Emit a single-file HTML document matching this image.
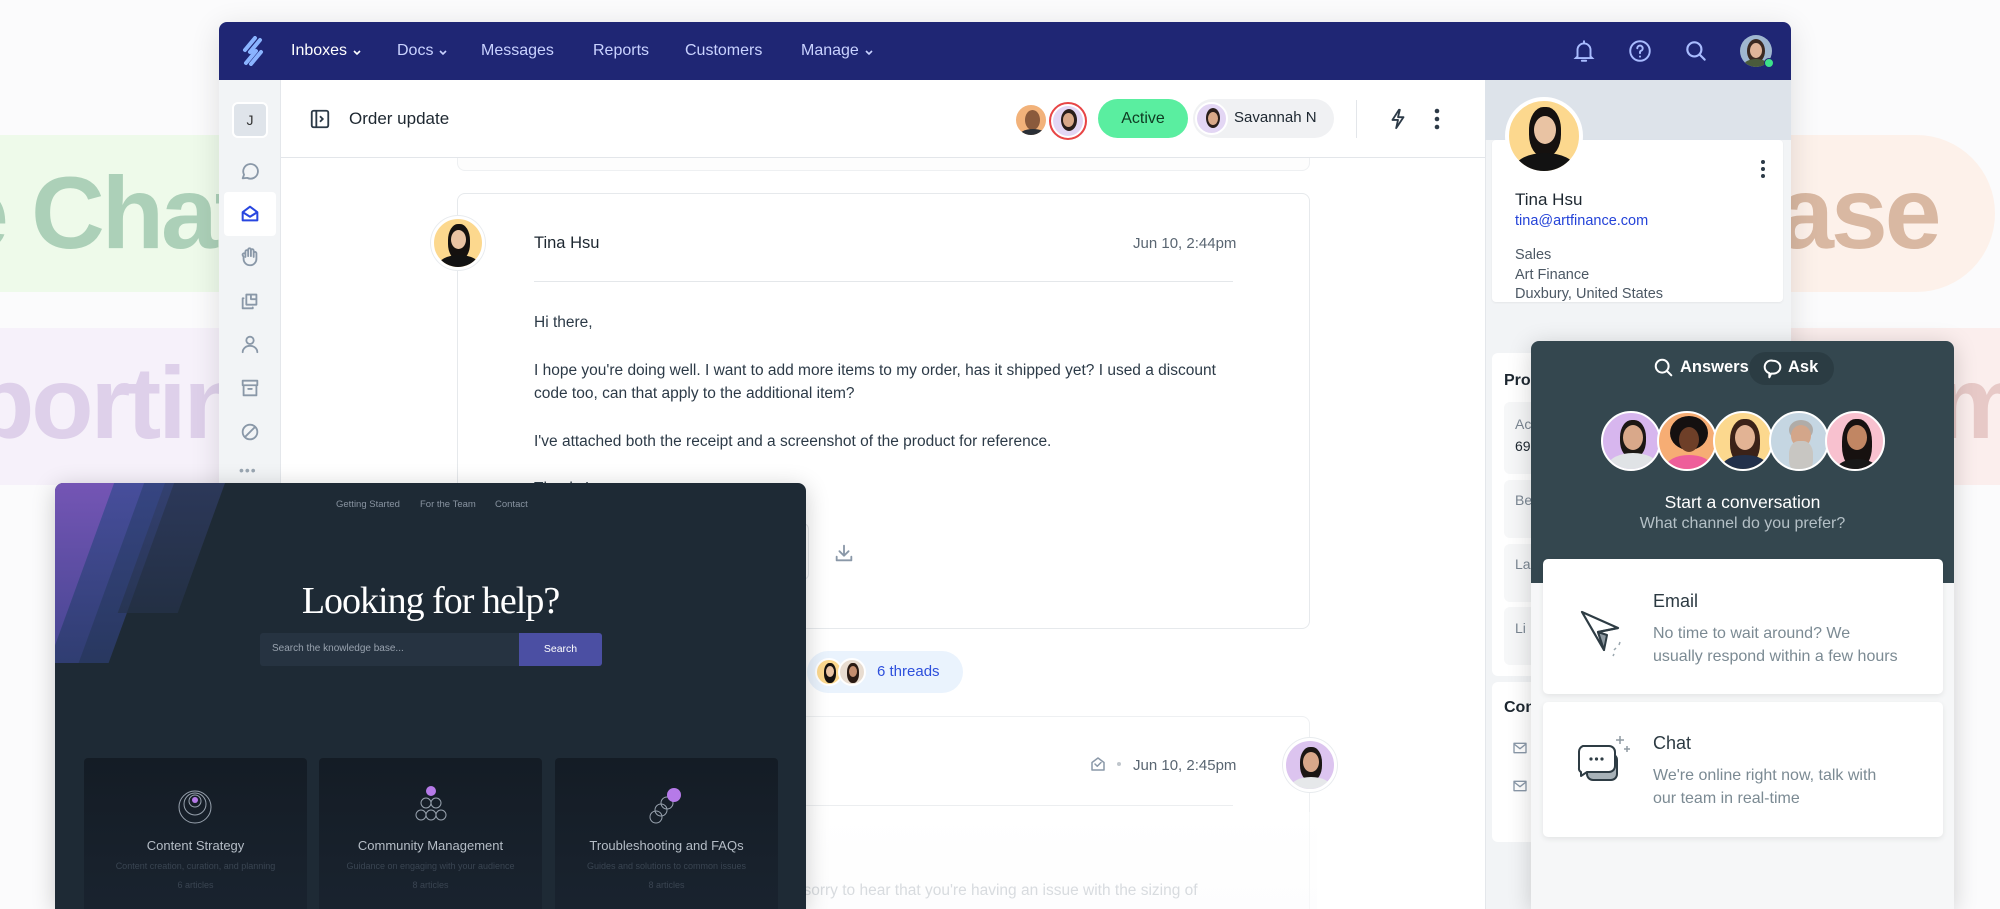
<!DOCTYPE html>
<html><head><meta charset="utf-8">
<style>
*{box-sizing:border-box;margin:0;padding:0}
body{width:2000px;height:909px;overflow:hidden;background:#fbfbfc;font-family:"Liberation Sans",sans-serif;position:relative;color:#1d2730}
.a{position:absolute}
.t{position:absolute;white-space:nowrap}
.big{font-weight:bold;font-size:102px;letter-spacing:-3px;line-height:1}
.av{position:absolute;border-radius:50%;overflow:hidden;border:2px solid #fff}
.nav{color:#c9d2ff;font-size:16px;top:20px}
.ic{stroke:#8a98a8;fill:none;stroke-width:2;stroke-linecap:round;stroke-linejoin:round}
.chev{position:absolute;top:27px}
</style></head><body>

<!-- background bands -->
<div class="a" style="left:0;top:135px;width:330px;height:157px;background:#eefaea"></div>
<div class="t big" style="left:-48px;top:162px;color:#acd0b8">e Chat</div>
<div class="a" style="left:0;top:328px;width:330px;height:157px;background:#f6f1fa"></div>
<div class="t big" style="left:-28px;top:352px;color:#ded0ea">porting</div>
<div class="a" style="left:1700px;top:135px;width:295px;height:157px;background:#fdf1ea;border-radius:0 80px 80px 0"></div>
<div class="t big" style="left:1718px;top:162px;color:#d9b8a2">base</div>
<div class="a" style="left:1700px;top:328px;width:300px;height:157px;background:#fbeeed"></div>
<div class="t big" style="left:1935px;top:352px;color:#e7c9c7">m</div>

<!-- app window -->
<div class="a" style="left:219px;top:22px;width:1572px;height:887px;background:#fff;border-radius:8px 8px 0 0;box-shadow:0 6px 30px rgba(0,0,0,.12);overflow:hidden">
 <div class="a" style="left:0;top:0;width:1572px;height:58px;background:#1f2674"></div>
 <svg class="a" style="left:22px;top:14px" width="24" height="30" viewBox="0 0 24 30"><path d="M4 14 L14 2 M9 16 L19 4 M5 27 L15 15 M10 28 L20 16" stroke="#8ab4ff" stroke-width="4" stroke-linecap="round"/></svg>
 <div class="t nav" style="left:72px;color:#fff">Inboxes</div>
 <svg class="chev" style="left:133px" width="10" height="8" viewBox="0 0 10 8"><path d="M2 2l3 3 3-3" fill="none" stroke="#fff" stroke-width="1.6"/></svg>
 <div class="t nav" style="left:178px">Docs</div>
 <svg class="chev" style="left:219px" width="10" height="8" viewBox="0 0 10 8"><path d="M2 2l3 3 3-3" fill="none" stroke="#c9d2ff" stroke-width="1.6"/></svg>
 <div class="t nav" style="left:262px">Messages</div>
 <div class="t nav" style="left:374px">Reports</div>
 <div class="t nav" style="left:466px">Customers</div>
 <div class="t nav" style="left:582px">Manage</div>
 <svg class="chev" style="left:645px" width="10" height="8" viewBox="0 0 10 8"><path d="M2 2l3 3 3-3" fill="none" stroke="#c9d2ff" stroke-width="1.6"/></svg>
 <svg class="a" style="left:1352px;top:16px" width="26" height="26" viewBox="0 0 24 24" fill="none" stroke="#a9bcff" stroke-width="1.8" stroke-linecap="round"><path d="M6 17V11a6 6 0 0 1 12 0v6l1.5 1.5h-15Z M10 21h4 M12 3v2"/></svg>
 <svg class="a" style="left:1408px;top:16px" width="26" height="26" viewBox="0 0 24 24" fill="none" stroke="#a9bcff" stroke-width="1.8" stroke-linecap="round"><circle cx="12" cy="12" r="9"/><path d="M9.5 9.5a2.5 2.5 0 1 1 3.5 2.3c-.7.3-1 .8-1 1.5V14 M12 17v.2"/></svg>
 <svg class="a" style="left:1464px;top:16px" width="26" height="26" viewBox="0 0 24 24" fill="none" stroke="#a9bcff" stroke-width="2" stroke-linecap="round"><circle cx="10.5" cy="10.5" r="6.5"/><path d="M15.5 15.5 20 20"/></svg>
 <div class="av" style="left:1521px;top:13px;width:32px;height:32px;background:#9fb7d0;border:none"><div class="a" style="left:7px;top:4px;width:18px;height:24px;border-radius:50%;background:#3b2a22"></div><div class="a" style="left:10px;top:8px;width:12px;height:15px;border-radius:50%;background:#e0b59a"></div><div class="a" style="left:4px;top:24px;width:24px;height:12px;border-radius:50%;background:#4a5a3c"></div></div>
 <div class="a" style="left:1545px;top:36px;width:10px;height:10px;border-radius:50%;background:#3de28a;border:1.5px solid #1f2674"></div>

 <!-- sidebar -->
 <div class="a" style="left:0;top:58px;width:62px;height:850px;background:#f2f4f6;border-right:1px solid #e4e7eb"></div>
 <div class="a" style="left:13px;top:80px;width:36px;height:36px;border-radius:6px;background:#dfe4ea;border:2px solid #fff;font-size:14px;text-align:center;line-height:32px;color:#333">J</div>
 <div class="a" style="left:5px;top:170px;width:52px;height:44px;border-radius:4px;background:#fff"></div>
 <svg class="a" style="left:20px;top:138px" width="22" height="22" viewBox="0 0 24 24"><path class="ic" d="M4 20l1.5-4A8 8 0 1 1 9 19.5Z"/></svg>
 <svg class="a" style="left:20px;top:181px" width="22" height="22" viewBox="0 0 24 24"><path d="M4 10l8-6 8 6v9H4Z M4 10l8 5 8-5" fill="none" stroke="#2846e0" stroke-width="2.2" stroke-linejoin="round"/></svg>
 <svg class="a" style="left:20px;top:224px" width="22" height="22" viewBox="0 0 24 24"><path class="ic" d="M7 12V6a1.5 1.5 0 0 1 3 0v5V4a1.5 1.5 0 0 1 3 0v7V5a1.5 1.5 0 0 1 3 0v7V8a1.5 1.5 0 0 1 3 0v6a7 7 0 0 1-14 0v-2l-1-2a1.5 1.5 0 0 1 3-1"/></svg>
 <svg class="a" style="left:20px;top:268px" width="22" height="22" viewBox="0 0 24 24"><path class="ic" d="M5 9h-1v11h11v-1 M8 5h11v11H8Z M13 5v5h6"/></svg>
 <svg class="a" style="left:20px;top:311px" width="22" height="22" viewBox="0 0 24 24"><circle class="ic" cx="12" cy="8" r="4"/><path class="ic" d="M4 21a8 7 0 0 1 16 0"/></svg>
 <svg class="a" style="left:20px;top:355px" width="22" height="22" viewBox="0 0 24 24"><path class="ic" d="M4 4h16v5H4Z M5 9v11h14V9 M10 13h4"/></svg>
 <svg class="a" style="left:20px;top:399px" width="22" height="22" viewBox="0 0 24 24"><circle class="ic" cx="12" cy="12" r="8"/><path class="ic" d="M7 17 17 7"/></svg>
 <div class="t" style="left:20px;top:440px;color:#9aa6b2;font-size:14px;letter-spacing:1px">•••</div>

 <!-- faded card above -->
 <div class="a" style="left:238px;top:130px;width:853px;height:19px;border:1px solid #eef0f2;border-top:none;border-radius:0 0 8px 8px;background:#fdfdfd"></div>
 <!-- header -->
 <div class="a" style="left:62px;top:58px;width:1204px;height:78px;border-bottom:1px solid #e3e6ea;background:#fff"></div>
 <svg class="a" style="left:90px;top:86px" width="22" height="22" viewBox="0 0 24 24"><rect x="3" y="3" width="18" height="18" rx="2" fill="none" stroke="#2c3a47" stroke-width="2"/><path d="M8 3v18 M12 9l3 3-3 3" fill="none" stroke="#2c3a47" stroke-width="2"/></svg>
 <div class="t" style="left:130px;top:87px;font-size:17px;color:#1d2730">Order update</div>
 <div class="av" style="left:795px;top:81px;width:34px;height:34px;background:#f2b27a"><div class="a" style="left:9px;top:5px;width:15px;height:20px;border-radius:50%;background:#8a5a3c"></div><div class="a" style="left:3px;top:24px;width:28px;height:14px;border-radius:50%;background:#2a2f36"></div></div>
 <div class="av" style="left:830px;top:80px;width:38px;height:38px;background:#e3d6f4;border:2px solid #e84545;box-shadow:inset 0 0 0 2px #fff"><div class="a" style="left:10px;top:5px;width:16px;height:22px;border-radius:50%;background:#2a1e1a"></div><div class="a" style="left:12px;top:9px;width:11px;height:14px;border-radius:50%;background:#d9a888"></div></div>
 <div class="a" style="left:879px;top:77px;width:90px;height:39px;border-radius:20px;background:#5aeea0;font-size:16px;text-align:center;line-height:39px;color:#0f3a22">Active</div>
 <div class="a" style="left:974px;top:77px;width:141px;height:39px;border-radius:20px;background:#f0f1f3"></div>
 <div class="av" style="left:976px;top:80px;width:33px;height:33px;background:#e3d6f4"><div class="a" style="left:9px;top:4px;width:14px;height:20px;border-radius:50%;background:#2a1e1a"></div><div class="a" style="left:11px;top:8px;width:10px;height:13px;border-radius:50%;background:#d9a888"></div></div>
 <div class="t" style="left:1015px;top:87px;font-size:15px;color:#1d2730">Savannah N</div>
 <div class="a" style="left:1137px;top:78px;width:1px;height:38px;background:#e3e6ea"></div>
 <svg class="a" style="left:1168px;top:85px" width="22" height="24" viewBox="0 0 24 24"><path d="M13 2 6 13h6l-2 9 8-12h-6l2-8Z" fill="none" stroke="#2c3a47" stroke-width="2" stroke-linejoin="round"/></svg>
 <svg class="a" style="left:1215px;top:86px" width="6" height="22" viewBox="0 0 6 22"><circle cx="3" cy="3" r="2.3" fill="#2c3a47"/><circle cx="3" cy="11" r="2.3" fill="#2c3a47"/><circle cx="3" cy="19" r="2.3" fill="#2c3a47"/></svg>

 <!-- message card -->
 <div class="a" style="left:238px;top:171px;width:853px;height:436px;border:1px solid #e6e9ec;border-radius:8px;background:#fff"></div>
 <div class="av" style="left:212px;top:194px;width:54px;height:54px;background:#fcd88e;border:3px solid #fff;box-shadow:0 0 0 1px #e8ebee"><div class="a" style="left:14px;top:5px;width:22px;height:36px;border-radius:45%;background:#15110f"></div><div class="a" style="left:17px;top:11px;width:15px;height:19px;border-radius:50%;background:#e9c3a3"></div><div class="a" style="left:4px;top:36px;width:42px;height:22px;border-radius:50%;background:#121212"></div></div>
 <div class="t" style="left:315px;top:212px;font-size:16.5px;color:#1d2730">Tina Hsu</div>
 <div class="t" style="left:914px;top:213px;font-size:15px;color:#5a6672;text-align:right;width:100px">Jun 10, 2:44pm</div>
 <div class="a" style="left:315px;top:259px;width:699px;height:1px;background:#e4e7ea"></div>
 <div class="a" style="left:315px;top:289px;font-size:15.5px;color:#2c3a47;line-height:23.5px;width:705px">
  <div>Hi there,</div>
  <div style="margin-top:24px">I hope you're doing well. I want to add more items to my order, has it shipped yet? I used a discount code too, can that apply to the additional item?</div>
  <div style="margin-top:24px">I've attached both the receipt and a screenshot of the product for reference.</div>
  <div style="margin-top:24px">Thanks!</div>
 </div>
 <div class="a" style="left:500px;top:501px;width:90px;height:57px;border:1px solid #e4e7ea;border-radius:6px"></div>
 <svg class="a" style="left:614px;top:519px" width="22" height="24" viewBox="0 0 24 24"><path class="ic" d="M12 4v11 M7 10l5 5 5-5 M4 16v4h16v-4"/></svg>
 <!-- threads -->
 <div class="a" style="left:588px;top:629px;width:156px;height:42px;border-radius:21px;background:#eaf3fd"></div>
 <div class="av" style="left:596px;top:636px;width:28px;height:28px;background:#fcd88e"><div class="a" style="left:7px;top:3px;width:12px;height:20px;border-radius:45%;background:#15110f"></div><div class="a" style="left:9px;top:6px;width:8px;height:11px;border-radius:50%;background:#e9c3a3"></div></div>
 <div class="av" style="left:619px;top:636px;width:28px;height:28px;background:#e8dcd0"><div class="a" style="left:7px;top:3px;width:12px;height:20px;border-radius:45%;background:#2a1a12"></div><div class="a" style="left:9px;top:6px;width:8px;height:11px;border-radius:50%;background:#c58e6e"></div></div>
 <div class="t" style="left:658px;top:641px;font-size:15px;color:#2d4fdc">6 threads</div>
 <!-- second card -->
 <div class="a" style="left:238px;top:694px;width:853px;height:260px;border:1px solid #eef0f2;border-radius:8px;background:#fff"></div>
 <div class="av" style="left:1064px;top:716px;width:54px;height:54px;background:#dcc4ef;border:3px solid #fff;box-shadow:0 0 0 1px #e8ebee"><div class="a" style="left:14px;top:6px;width:22px;height:34px;border-radius:45%;background:#1c1714"></div><div class="a" style="left:17px;top:11px;width:16px;height:20px;border-radius:50%;background:#d9a88a"></div><div class="a" style="left:5px;top:36px;width:40px;height:20px;border-radius:50%;background:#e6e8ea"></div></div>
 <svg class="a" style="left:870px;top:733px" width="18" height="18" viewBox="0 0 24 24"><path class="ic" d="M4 10l8-6 8 6v10H4Z M8 12l3 3 5-5"/></svg>
 <div class="a" style="left:898px;top:740px;width:4px;height:4px;border-radius:50%;background:#c0c6cc"></div>
 <div class="t" style="left:914px;top:735px;font-size:15px;color:#5a6672;text-align:right;width:100px">Jun 10, 2:45pm</div>
 <div class="a" style="left:315px;top:783px;width:699px;height:1px;background:#eceef0"></div>
 <div class="t" style="left:560px;top:860px;font-size:15.5px;color:#a8b0b8">I'm sorry to hear that you're having an issue with the sizing of</div>
 <div class="a" style="left:238px;top:790px;width:860px;height:120px;background:linear-gradient(rgba(255,255,255,.5),rgba(251,251,252,.6))"></div>

 <!-- right panel -->
 <div class="a" style="left:1266px;top:58px;width:306px;height:850px;background:#f2f4f6;border-left:1px solid #e4e7eb"></div>
 <div class="a" style="left:1266px;top:58px;width:306px;height:60px;background:#dde3ea"></div>
 <div class="a" style="left:1273px;top:118px;width:291px;height:162px;background:#fff;border-radius:4px;box-shadow:0 1px 2px rgba(0,0,0,.06)"></div>
 <div class="av" style="left:1286px;top:75px;width:78px;height:78px;background:#fcd88e;border:4px solid #fff"><div class="a" style="left:20px;top:6px;width:32px;height:50px;border-radius:45%;background:#15110f"></div><div class="a" style="left:25px;top:15px;width:22px;height:28px;border-radius:50%;background:#e9c3a3"></div><div class="a" style="left:6px;top:52px;width:60px;height:30px;border-radius:50%;background:#121212"></div></div>
 <svg class="a" style="left:1541px;top:137px" width="6" height="20" viewBox="0 0 6 20"><circle cx="3" cy="3" r="2" fill="#2c3a47"/><circle cx="3" cy="10" r="2" fill="#2c3a47"/><circle cx="3" cy="17" r="2" fill="#2c3a47"/></svg>
 <div class="t" style="left:1296px;top:168px;font-size:17px;color:#1d2730">Tina Hsu</div>
 <div class="t" style="left:1296px;top:191px;font-size:14.5px;color:#2443d8">tina@artfinance.com</div>
 <div class="t" style="left:1296px;top:224px;font-size:14.5px;color:#4c5864;line-height:19.5px">Sales<br>Art Finance<br>Duxbury, United States</div>
 <div class="a" style="left:1273px;top:331px;width:291px;height:323px;background:#fff;border-radius:6px"></div>
 <div class="t" style="left:1285px;top:350px;font-size:16px;font-weight:bold;color:#1d2730">Properties</div>
 <div class="a" style="left:1285px;top:380px;width:270px;height:72px;background:#f6f7f8;border-radius:6px"></div>
 <div class="t" style="left:1296px;top:394px;font-size:14px;color:#7a8692">Account</div>
 <div class="t" style="left:1296px;top:416px;font-size:14px;color:#1d2730">69</div>
 <div class="a" style="left:1285px;top:458px;width:270px;height:58px;background:#f6f7f8;border-radius:6px"></div>
 <div class="t" style="left:1296px;top:470px;font-size:14px;color:#7a8692">Be</div>
 <div class="a" style="left:1285px;top:522px;width:270px;height:58px;background:#f6f7f8;border-radius:6px"></div>
 <div class="t" style="left:1296px;top:534px;font-size:14px;color:#7a8692">La</div>
 <div class="a" style="left:1285px;top:585px;width:270px;height:58px;background:#f6f7f8;border-radius:6px"></div>
 <div class="t" style="left:1296px;top:598px;font-size:14px;color:#7a8692">Li</div>
 <div class="a" style="left:1273px;top:660px;width:291px;height:160px;background:#fff;border-radius:6px"></div>
 <div class="t" style="left:1285px;top:677px;font-size:16px;font-weight:bold;color:#1d2730">Contact</div>
 <svg class="a" style="left:1293px;top:718px" width="16" height="16" viewBox="0 0 24 24"><path class="ic" d="M3 5h18v14H3Z M3 6l9 7 9-7"/></svg>
 <svg class="a" style="left:1293px;top:756px" width="16" height="16" viewBox="0 0 24 24"><path class="ic" d="M3 5h18v14H3Z M3 6l9 7 9-7"/></svg>
</div>

<!-- chat widget -->
<div class="a" style="left:1531px;top:341px;width:423px;height:568px;background:#f6f7f8;border-radius:8px 8px 0 0;box-shadow:0 4px 24px rgba(0,0,0,.18);overflow:hidden">
 <div class="a" style="left:0;top:0;width:423px;height:242px;background:#34474f"></div>
 <svg class="a" style="left:122px;top:16px" width="22" height="22" viewBox="0 0 24 24"><circle cx="10" cy="10" r="7" fill="none" stroke="#fff" stroke-width="2.2"/><path d="M15 15l5 5" stroke="#fff" stroke-width="2.2" stroke-linecap="round"/></svg>
 <div class="t" style="left:149px;top:17px;font-size:16.5px;font-weight:bold;color:#fff">Answers</div>
 <div class="a" style="left:218px;top:11px;width:85px;height:33px;border-radius:17px;background:#2b3c43"></div>
 <svg class="a" style="left:231px;top:17px" width="22" height="22" viewBox="0 0 24 24"><path d="M12 3a8 7 0 0 1 0 14h-2l-2 4v-4.5A7 7 0 0 1 12 3Z" fill="none" stroke="#fff" stroke-width="2.2" stroke-linejoin="round"/></svg>
 <div class="t" style="left:257px;top:17px;font-size:16.5px;font-weight:bold;color:#fff">Ask</div>
 <div class="av" style="left:70px;top:70px;width:60px;height:60px;background:#d7b6ee"><div class="a" style="left:17px;top:7px;width:26px;height:38px;border-radius:45%;background:#1c1714"></div><div class="a" style="left:20px;top:12px;width:20px;height:25px;border-radius:50%;background:#d9a88a"></div><div class="a" style="left:5px;top:40px;width:50px;height:26px;border-radius:50%;background:#e0e3e6"></div></div>
 <div class="av" style="left:126px;top:70px;width:60px;height:60px;background:#f6ad74"><div class="a" style="left:11px;top:3px;width:38px;height:34px;border-radius:50%;background:#141010"></div><div class="a" style="left:20px;top:14px;width:20px;height:25px;border-radius:50%;background:#6e3f28"></div><div class="a" style="left:7px;top:42px;width:46px;height:24px;border-radius:50%;background:#ee5e9a"></div></div>
 <div class="av" style="left:182px;top:70px;width:60px;height:60px;background:#fcd88e"><div class="a" style="left:15px;top:6px;width:30px;height:46px;border-radius:45%;background:#3b2218"></div><div class="a" style="left:20px;top:12px;width:20px;height:25px;border-radius:50%;background:#e2b394"></div><div class="a" style="left:7px;top:42px;width:46px;height:24px;border-radius:50%;background:#22304a"></div></div>
 <div class="av" style="left:238px;top:70px;width:60px;height:60px;background:#c5d6e2"><div class="a" style="left:18px;top:7px;width:24px;height:20px;border-radius:50%;background:#b0aca8"></div><div class="a" style="left:20px;top:12px;width:20px;height:22px;border-radius:50%;background:#d3a68a"></div><div class="a" style="left:18px;top:28px;width:24px;height:32px;border-radius:40%;background:#c8c6c2"></div></div>
 <div class="av" style="left:294px;top:70px;width:60px;height:60px;background:#f8c1cf"><div class="a" style="left:15px;top:6px;width:30px;height:50px;border-radius:45%;background:#171110"></div><div class="a" style="left:20px;top:12px;width:20px;height:25px;border-radius:50%;background:#c18663"></div><div class="a" style="left:10px;top:46px;width:40px;height:20px;border-radius:50%;background:#181818"></div></div>
 <div class="t" style="left:0;width:423px;text-align:center;top:151px;font-size:17.5px;color:#fff">Start a conversation</div>
 <div class="t" style="left:0;width:423px;text-align:center;top:174px;font-size:16px;color:#b4c0c6">What channel do you prefer?</div>
 <div class="a" style="left:12px;top:218px;width:400px;height:135px;background:#fff;border-radius:5px;box-shadow:0 2px 6px rgba(0,0,0,.08)"></div>
 <svg class="a" style="left:45px;top:265px" width="56" height="56" viewBox="0 0 56 56"><path d="M6 6 42 22 22 26 28 44Z" fill="#fff" stroke="#2e3c44" stroke-width="2.2" stroke-linejoin="round"/><path d="M22 26 28 44 31 29Z" fill="#8f9aa2" stroke="#2e3c44" stroke-width="2" stroke-linejoin="round"/><path d="M42 22 22 26" stroke="#2e3c44" stroke-width="2"/><path d="M44 36l-1 3 M40 42l-2 2 M38 48l-1 2" stroke="#9aa6ae" stroke-width="1.5"/></svg>
 <div class="t" style="left:122px;top:250px;font-size:18px;color:#2c3a42">Email</div>
 <div class="t" style="left:122px;top:281px;font-size:16px;color:#7b8a93;line-height:23px">No time to wait around? We<br>usually respond within a few hours</div>
 <div class="a" style="left:12px;top:361px;width:400px;height:135px;background:#fff;border-radius:5px;box-shadow:0 2px 6px rgba(0,0,0,.08)"></div>
 <svg class="a" style="left:42px;top:393px" width="64" height="64" viewBox="0 0 64 64"><rect x="14" y="20" width="30" height="26" rx="6" fill="#a8b2b8" stroke="#2e3c44" stroke-width="2"/><path d="M10 12h26a6 6 0 0 1 6 6v14a6 6 0 0 1-6 6H14l-6 4v-4a4 4 0 0 1 -2-4V18a6 6 0 0 1 4-6Z" fill="#fff" stroke="#2e3c44" stroke-width="2" stroke-linejoin="round"/><circle cx="18" cy="25" r="1.6" fill="#2e3c44"/><circle cx="23.5" cy="25" r="1.6" fill="#2e3c44"/><circle cx="29" cy="25" r="1.6" fill="#2e3c44"/><path d="M47 2v8 M43 6h8 M54 12v6 M51 15h6" stroke="#8f9aa2" stroke-width="1.5"/></svg>
 <div class="t" style="left:122px;top:392px;font-size:18px;color:#2c3a42">Chat</div>
 <div class="t" style="left:122px;top:423px;font-size:16px;color:#7b8a93;line-height:23px">We're online right now, talk with<br>our team in real-time</div>
</div>

<!-- knowledge base panel -->
<div class="a" style="left:55px;top:483px;width:751px;height:426px;background:#1e2a35;border-radius:8px 8px 0 0;overflow:hidden;box-shadow:0 4px 24px rgba(0,0,0,.2)">
 <div class="a" style="left:-40px;top:-20px;width:100px;height:200px;background:linear-gradient(#8a5fd0,#4a4aa0);transform:skewX(-20deg);opacity:.85"></div>
 <div class="a" style="left:30px;top:-20px;width:60px;height:200px;background:linear-gradient(#3e4e9a,#2b3b6a);transform:skewX(-20deg);opacity:.8"></div>
 <div class="a" style="left:90px;top:-20px;width:60px;height:150px;background:linear-gradient(#34406e,#25324a);transform:skewX(-20deg);opacity:.7"></div>
 <div class="t" style="left:281px;top:16px;font-size:9.5px;color:#8893a0">Getting Started</div>
 <div class="t" style="left:365px;top:16px;font-size:9.5px;color:#8893a0">For the Team</div>
 <div class="t" style="left:440px;top:16px;font-size:9.5px;color:#8893a0">Contact</div>
 <div class="t" style="left:0;width:751px;text-align:center;top:96px;font-family:'Liberation Serif',serif;font-size:38px;color:#fff;letter-spacing:-1px">Looking for help?</div>
 <div class="a" style="left:205px;top:150px;width:342px;height:33px;background:#263341;border-radius:3px"></div>
 <div class="t" style="left:217px;top:160px;font-size:10px;color:#98a2ae">Search the knowledge base...</div>
 <div class="a" style="left:464px;top:150px;width:83px;height:33px;background:#4b4fa3;border-radius:0 3px 3px 0;color:#fff;font-size:10.5px;text-align:center;line-height:33px">Search</div>
 <div class="a" style="left:29px;top:275px;width:223px;height:170px;background:linear-gradient(#141c25,#1a2430);border-radius:4px"></div>
 <div class="a" style="left:264px;top:275px;width:223px;height:170px;background:linear-gradient(#141c25,#1a2430);border-radius:4px"></div>
 <div class="a" style="left:500px;top:275px;width:223px;height:170px;background:linear-gradient(#141c25,#1a2430);border-radius:4px"></div>
 <svg class="a" style="left:122px;top:306px" width="36" height="36" viewBox="0 0 36 36" fill="none" stroke="#98a2ae" stroke-width="1"><circle cx="18" cy="18" r="16"/><circle cx="18" cy="15" r="11"/><circle cx="18" cy="12" r="6"/><circle cx="18" cy="11" r="3" fill="#b67ae8" stroke="none"/></svg>
 <svg class="a" style="left:357px;top:302px" width="38" height="40" viewBox="0 0 38 40" fill="none" stroke="#98a2ae" stroke-width="1"><circle cx="19" cy="6" r="5" fill="#b67ae8" stroke="none"/><circle cx="14" cy="18" r="5"/><circle cx="24" cy="18" r="5"/><circle cx="9" cy="30" r="5"/><circle cx="19" cy="30" r="5"/><circle cx="29" cy="30" r="5"/></svg>
 <svg class="a" style="left:591px;top:302px" width="40" height="40" viewBox="0 0 40 40" fill="none" stroke="#98a2ae" stroke-width="1"><circle cx="10" cy="32" r="6"/><circle cx="15" cy="25" r="6"/><circle cx="21" cy="18" r="6"/><circle cx="28" cy="10" r="7" fill="#b67ae8" stroke="none"/></svg>
 <div class="t" style="left:29px;width:223px;text-align:center;top:355px;font-size:13px;color:#b5bdc6">Content Strategy</div>
 <div class="t" style="left:264px;width:223px;text-align:center;top:355px;font-size:13px;color:#b5bdc6">Community Management</div>
 <div class="t" style="left:500px;width:223px;text-align:center;top:355px;font-size:13px;color:#b5bdc6">Troubleshooting and FAQs</div>
 <div class="t" style="left:29px;width:223px;text-align:center;top:378px;font-size:9px;color:#3a4552">Content creation, curation, and planning</div>
 <div class="t" style="left:264px;width:223px;text-align:center;top:378px;font-size:9px;color:#3a4552">Guidance on engaging with your audience</div>
 <div class="t" style="left:500px;width:223px;text-align:center;top:378px;font-size:9px;color:#3a4552">Guides and solutions to common issues</div>
 <div class="t" style="left:29px;width:223px;text-align:center;top:397px;font-size:9px;color:#3a4552">6 articles</div>
 <div class="t" style="left:264px;width:223px;text-align:center;top:397px;font-size:9px;color:#3a4552">8 articles</div>
 <div class="t" style="left:500px;width:223px;text-align:center;top:397px;font-size:9px;color:#3a4552">8 articles</div>
</div>
</body></html>
